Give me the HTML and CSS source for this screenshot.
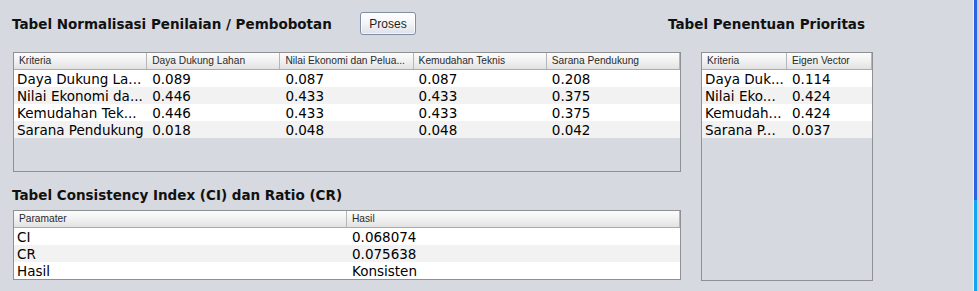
FILE: index.html
```html
<!DOCTYPE html>
<html lang="id">
<head>
  <meta charset="UTF-8">
  <title>Perhitungan AHP</title>
  <link rel="stylesheet" href="styles.css">
</head>
<body>
  <div class="screen">
    <div class="panel">

      <!-- Judul dan tombol proses -->
      <div class="topbar">
        <h2 class="title">Tabel Normalisasi Penilaian / Pembobotan</h2>
        <div><button type="button" class="btn">Proses</button></div>
        <h2 class="title">Tabel Penentuan Prioritas</h2>
      </div>

      <div class="content">
        <div class="left">

          <!-- Tabel normalisasi -->
          <div class="grid grid-norm">
            <div class="row head cols-5">
              <div class="cell">Kriteria</div>
              <div class="cell">Daya Dukung Lahan</div>
              <div class="cell">Nilai Ekonomi dan Pelua...</div>
              <div class="cell">Kemudahan Teknis</div>
              <div class="cell">Sarana Pendukung</div>
            </div>
            <div class="row cols-5">
              <div class="cell">Daya Dukung La...</div>
              <div class="cell">0.089</div>
              <div class="cell">0.087</div>
              <div class="cell">0.087</div>
              <div class="cell">0.208</div>
            </div>
            <div class="row cols-5">
              <div class="cell">Nilai Ekonomi da...</div>
              <div class="cell">0.446</div>
              <div class="cell">0.433</div>
              <div class="cell">0.433</div>
              <div class="cell">0.375</div>
            </div>
            <div class="row cols-5">
              <div class="cell">Kemudahan Tek...</div>
              <div class="cell">0.446</div>
              <div class="cell">0.433</div>
              <div class="cell">0.433</div>
              <div class="cell">0.375</div>
            </div>
            <div class="row cols-5">
              <div class="cell">Sarana Pendukung</div>
              <div class="cell">0.018</div>
              <div class="cell">0.048</div>
              <div class="cell">0.048</div>
              <div class="cell">0.042</div>
            </div>
          </div>

          <h2 class="title sub">Tabel Consistency Index (CI) dan Ratio (CR)</h2>

          <!-- Tabel CI / CR -->
          <div class="grid grid-ci">
            <div class="row head cols-2">
              <div class="cell">Paramater</div>
              <div class="cell">Hasil</div>
            </div>
            <div class="row cols-2">
              <div class="cell">CI</div>
              <div class="cell">0.068074</div>
            </div>
            <div class="row cols-2">
              <div class="cell">CR</div>
              <div class="cell">0.075638</div>
            </div>
            <div class="row cols-2">
              <div class="cell">Hasil</div>
              <div class="cell">Konsisten</div>
            </div>
          </div>
        </div>

        <div class="right">
          <!-- Tabel prioritas -->
          <div class="grid grid-prio">
            <div class="row head cols-2">
              <div class="cell">Kriteria</div>
              <div class="cell">Eigen Vector</div>
            </div>
            <div class="row cols-2">
              <div class="cell">Daya Duk...</div>
              <div class="cell">0.114</div>
            </div>
            <div class="row cols-2">
              <div class="cell">Nilai Eko...</div>
              <div class="cell">0.424</div>
            </div>
            <div class="row cols-2">
              <div class="cell">Kemudah...</div>
              <div class="cell">0.424</div>
            </div>
            <div class="row cols-2">
              <div class="cell">Sarana P...</div>
              <div class="cell">0.037</div>
            </div>
          </div>
        </div>
      </div>
    </div>

    <!-- tepi jendela di belakang -->
    <div class="edge">
      <div class="edge-light"></div>
      <div class="edge-blue"></div>
      <div class="edge-pale"></div>
    </div>
  </div>
</body>
</html>
```

FILE: styles.css
```css
body {
  margin: 0;
  background-color: #d6d9df;
  font-family: 'DejaVu Sans', sans-serif;
  color: #000;
}

.screen {
  display: flex;
  height: 291px;
  overflow: hidden;
}

.panel {
  width: 973px;
}

.topbar {
  display: grid;
  grid-template-columns: 348px 308px auto;
  padding-left: 12px;
  height: 52px;
}

.title {
  margin: 0;
  padding-top: 15px;
  font-size: 13.5px;
  line-height: 18px;
  font-weight: bold;
  color: #111;
  white-space: nowrap;
}

.title.sub {
  padding: 14px 0 6px;
  margin-left: -1px;
}

.btn {
  margin-top: 12px;
  width: 56px;
  height: 23px;
  padding: 0;
  border: 1px solid #7f8ea4;
  border-radius: 3px;
  background: linear-gradient(#ffffff, #f3f4f6 50%, #dde1e7);
  box-shadow: inset 0 0 0 1px rgba(255, 255, 255, 0.7);
  font-family: 'Liberation Sans', sans-serif;
  font-size: 12px;
  color: #1e1e1e;
}

.content {
  display: flex;
  gap: 20px;
  padding-left: 13px;
}

.left {
  width: 668px;
}

.right {
  width: 172px;
}

.grid {
  box-sizing: border-box;
  border: 1px solid #8f9092;
  background-color: #d6d9df;
  overflow: hidden;
}

.grid-norm { height: 120px; }
.grid-ci { height: 70px; }
.grid-prio { height: 229px; }

.row {
  display: grid;
  height: 17px;
  background-color: #fff;
}

.row:nth-child(odd) {
  background-color: #f2f2f2;
}

.cols-5 { grid-template-columns: repeat(5, 1fr); }
.cols-2 { grid-template-columns: repeat(2, 1fr); }

.cell {
  padding: 1px 0 0 5px;
  font-size: 13.5px;
  line-height: 16px;
  white-space: nowrap;
  overflow: hidden;
}

.cell:first-child {
  padding-left: 3px;
}

.row.head {
  height: 16px;
  border-bottom: 1px solid #a9abae;
  background: linear-gradient(#fcfcfc, #f1f1f1 50%, #e2e2e3);
}

.row.head .cell {
  padding: 0 0 0 5px;
  border-right: 1px solid #b4b6b9;
  font-family: 'Liberation Sans', sans-serif;
  font-size: 10.2px;
  line-height: 16px;
  color: #2a2a2a;
}

.edge {
  display: flex;
  width: 6px;
}

.edge-light {
  width: 1px;
  background: #eceef3;
}

.edge-blue {
  width: 3px;
  background: linear-gradient(#2b62df 0, #2b62df 200px, #13a3ef 200px);
}

.edge-pale {
  width: 2px;
  background: #c8d0dd;
}
```
